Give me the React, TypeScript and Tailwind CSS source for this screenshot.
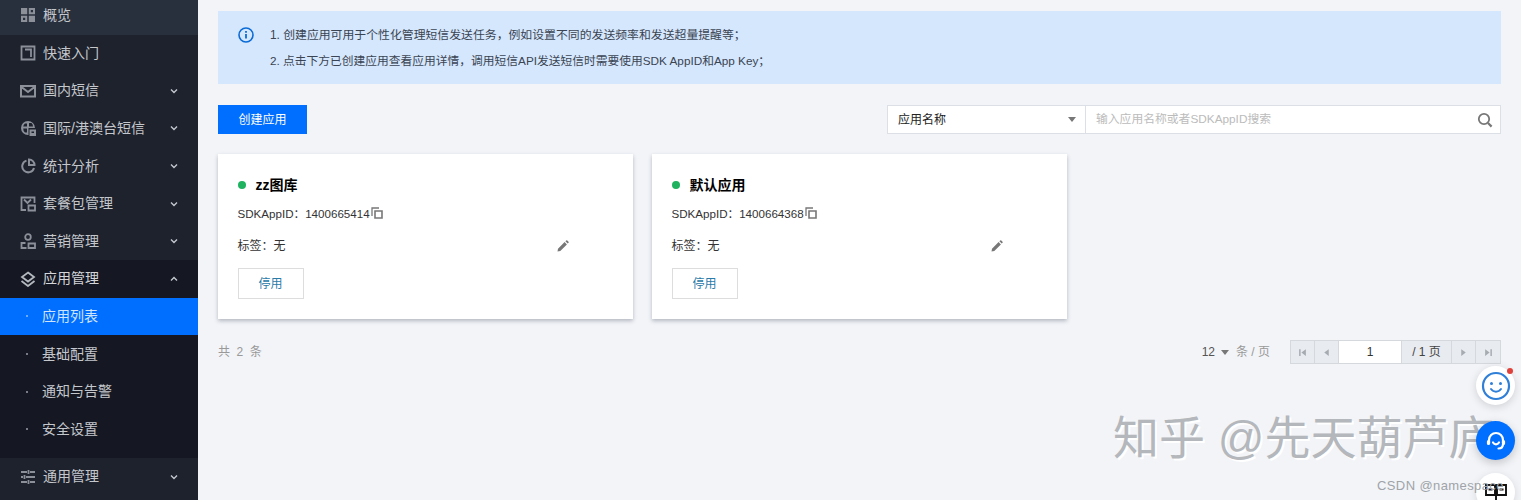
import type { ReactNode } from "react";

const font = "font-['Liberation_Sans','Noto_Sans_CJK_SC',sans-serif]";

function Chevron({ up }: { up?: boolean }) {
  return (
    <svg width="8" height="6" viewBox="0 0 8 6" fill="none" className="text-[#c4c8cf]">
      <path d={up ? "M1 4.5 4 1.5l3 3" : "M1 1.5l3 3 3-3"} stroke="currentColor" strokeWidth="1.4" />
    </svg>
  );
}

const iconCls = "w-[16px] h-[16px] text-[#8b9099]";

const icons: Record<string, ReactNode> = {
  overview: (
    <svg viewBox="0 0 16 16" className={iconCls} fill="currentColor">
      <path d="M1 1h6.2v6.2H1zM8.8 8.8H15V15H8.8z" />
      <path fillRule="evenodd" d="M8.8 1H15v6.2H8.8zm2 2v2.2H13V3zM1 8.8h6.2V15H1zm2 2V13h2.2v-2.2z" />
    </svg>
  ),
  start: (
    <svg viewBox="0 0 16 16" className={iconCls} fill="none" stroke="currentColor" strokeWidth="1.8">
      <path d="M1.5 1.5h13v13h-13zM5 4.5h6v7.5M11 4.5v7.5" />
    </svg>
  ),
  mail: (
    <svg viewBox="0 0 16 16" className={iconCls} fill="none" stroke="currentColor" strokeWidth="2">
      <path d="M1 3h14v10.5H1zM1.5 4l6.5 5 6.5-5" />
    </svg>
  ),
  globe: (
    <svg viewBox="0 0 16 16" className={iconCls} fill="currentColor">
      <path fillRule="evenodd" d="M8 1a7 7 0 1 0 0 14h.5V8H15a7 7 0 0 0-7-7zM5 3.5h2v3H3.2A5 5 0 0 1 5 3.5zM3.2 8.5H7v4H5a5 5 0 0 1-1.8-4zM9 3h2.5a5 5 0 0 1 1.5 3.5H9z" />
      <path d="M9.5 9.5h6.5v6.5H9.5z" />
      <path fill="#1e222d" d="M11.5 11.5h2.5V13h-2.5z" />
    </svg>
  ),
  chart: (
    <svg viewBox="0 0 16 16" className={iconCls} fill="none" stroke="currentColor" strokeWidth="2">
      <path d="M6.5 2.6A6 6 0 1 0 14 10" />
      <path d="M9 1.5a5.5 5.5 0 0 1 5.5 5.5H9z" />
    </svg>
  ),
  pack: (
    <svg viewBox="0 0 16 16" className={iconCls} fill="none" stroke="currentColor" strokeWidth="1.8">
      <path d="M6 14H1.5V1.5h13V7M4 3.5 7.5 7 11 3.5" />
      <path d="M8.5 9.5h6.5v5H8.5z" />
    </svg>
  ),
  user: (
    <svg viewBox="0 0 16 16" className={iconCls} fill="none" stroke="currentColor" strokeWidth="1.8">
      <circle cx="8" cy="4" r="2.8" />
      <path d="M5.5 10H1.5v5h5M8.5 10.5H15V15H8.5z" />
    </svg>
  ),
  layers: (
    <svg viewBox="0 0 16 16" className="w-[16px] h-[16px] text-[#b4b8bf]" fill="none" stroke="currentColor" strokeWidth="1.8">
      <path d="M8 1.5 14 6l-6 4.5L2 6z" />
      <path d="M1.5 10 8 15l6.5-5" />
    </svg>
  ),
  sliders: (
    <svg viewBox="0 0 16 16" className={iconCls} fill="none" stroke="currentColor" strokeWidth="1.8">
      <path d="M1 3h6M10 3h5M1 8h2M6 8h9M1 13h6M10 13h5M8.5 1v4M4.5 6v4M8.5 11v4" />
    </svg>
  ),
};

function NavRow({ icon, label, arrow, up, bright }: { icon: string; label: string; arrow?: boolean; up?: boolean; bright?: boolean }) {
  return (
    <div className="h-[37.6px] flex items-center pl-[20px] pr-[20px]">
      <span className="w-[23px] flex items-center">{icons[icon]}</span>
      <span className={`text-[14px] flex-1 whitespace-nowrap ${bright ? "text-[#d4d6da]" : "text-[#c4c7cc]"}`}>{label}</span>
      {arrow && <Chevron up={up} />}
    </div>
  );
}

function SubRow({ label, active }: { label: string; active?: boolean }) {
  return (
    <div className={`h-[37.6px] flex items-center pl-[26px] ${active ? "bg-[#006eff] text-[#cfe4ff]" : "text-[#c4c7cc]"}`}>
      <span className={`w-[2px] h-[2px] rounded-full mr-[14px] ${active ? "bg-[#8fc0ff]" : "bg-[#9a9ea6]"}`} />
      <span className="text-[14px]">{label}</span>
    </div>
  );
}

function Sidebar() {
  return (
    <aside className="w-[198px] shrink-0 h-full bg-[#1e222d] overflow-hidden">
      <div className="-mt-[4px]">
        <div className="bg-[#28303d] h-[38.5px] flex items-center pl-[20px]">
          <span className="w-[23px] flex items-center">{icons.overview}</span>
          <span className="text-[14px] text-[#c4c7cc]">概览</span>
        </div>
        <NavRow icon="start" label="快速入门" />
        <NavRow icon="mail" label="国内短信" arrow />
        <NavRow icon="globe" label="国际/港澳台短信" arrow />
        <NavRow icon="chart" label="统计分析" arrow />
        <NavRow icon="pack" label="套餐包管理" arrow />
        <NavRow icon="user" label="营销管理" arrow />
        <div className="bg-[#151822] pb-[10px]">
          <NavRow icon="layers" label="应用管理" arrow up bright />
          <SubRow label="应用列表" active />
          <SubRow label="基础配置" />
          <SubRow label="通知与告警" />
          <SubRow label="安全设置" />
        </div>
        <NavRow icon="sliders" label="通用管理" arrow />
      </div>
    </aside>
  );
}

function AppCard({ name, id }: { name: string; id: string }) {
  return (
    <div className="w-[414.5px] h-[165px] bg-white shadow-[0_2px_4px_rgba(54,58,80,0.32)] pt-[22px] px-[20px]">
      <div className="flex items-center h-[18px] -ml-[0.5px]">
        <span className="w-[8px] h-[8px] rounded-full bg-[#1fb25f] mr-[10px]" />
        <span className="text-[14px] font-bold text-black">{name}</span>
      </div>
      <div className="flex items-center h-[16px] mt-[12px] text-[11.6px] text-[#333] -ml-[0.5px]">
        <span>SDKAppID：{id}</span>
        <svg viewBox="0 0 12 12" className="w-[12px] h-[12px] ml-[1px] -mt-[2px] text-[#777]" fill="none" stroke="currentColor" strokeWidth="1.3">
          <path d="M1 9V1h7" />
          <path strokeWidth="1.6" d="M4 4h7v7H4z" />
        </svg>
      </div>
      <div className="flex items-center h-[16px] mt-[16px] text-[12px] text-[#333] w-[331.5px] justify-between -ml-[0.5px]">
        <span>标签：无</span>
        <svg viewBox="0 0 12 12" className="w-[12px] h-[12px] text-[#777]" fill="currentColor">
          <path d="M0.5 11.5 1 8.7 7.6 2.1l2.3 2.3-6.6 6.6zM8.4 1.3l.8-.8a.8.8 0 0 1 1.1 0l1.2 1.2a.8.8 0 0 1 0 1.1l-.8.8z" />
        </svg>
      </div>
      <button className="block w-[66px] h-[31px] mt-[14px] border border-[#dddddd] bg-white text-[12px] text-[#2b7ba8] -ml-[0.5px]">停用</button>
    </div>
  );
}

function PagerBtn({ d }: { d: string }) {
  return (
    <span className="w-[24px] h-full flex items-center justify-center border-r border-[#d5d9de] last:border-r-0">
      <svg viewBox="0 0 8 8" className="w-[9px] h-[9px] text-[#a6abb2]" fill="currentColor">
        <path d={d} />
      </svg>
    </span>
  );
}

function Pagination() {
  return (
    <div className="flex items-center h-[24px] mt-[21px] justify-between text-[12px]">
      <span className="text-[#999] tracking-[1.6px]">共 2 条</span>
      <div className="flex items-center h-full">
        <span className="text-[#555]">12</span>
        <span className="ml-[6px] w-0 h-0 border-x-[4px] border-x-transparent border-t-[5px] border-t-[#777] mt-[1px]" />
        <span className="ml-[7px] text-[#999]">条 / 页</span>
        <div className="ml-[20px] flex h-full items-stretch border border-[#d5d9de] bg-[#e8ebef]">
          <PagerBtn d="M1 1h1.3v6H1zM7 1v6L3 4z" />
          <PagerBtn d="M6 1v6L2 4z" />
          <span className="w-[63px] bg-white flex items-center justify-center text-[#333] border-r border-[#d5d9de]">1</span>
          <span className="w-[50px] flex items-center justify-center text-[#444] border-r border-[#d5d9de]">/ 1 页</span>
          <PagerBtn d="M2 1v6l4-3z" />
          <PagerBtn d="M1 1v6l4-3zM5.7 1H7v6H5.7z" />
        </div>
      </div>
    </div>
  );
}

function FloatButtons() {
  return (
    <>
      <div className="absolute left-[1476px] top-[366px] w-[39px] h-[39px] rounded-full bg-white shadow-[0_2px_8px_rgba(0,0,0,0.15)] flex items-center justify-center">
        <svg viewBox="0 0 30 30" className="w-[30px] h-[30px]" fill="none" stroke="#2f7fd8">
          <circle cx="15" cy="15" r="13" strokeWidth="2.2" />
          <circle cx="10.5" cy="12.5" r="1.5" fill="#2f7fd8" stroke="none" />
          <circle cx="19.5" cy="12.5" r="1.5" fill="#2f7fd8" stroke="none" />
          <path d="M10 18c2.5 3.5 7.5 3.5 10 0" strokeWidth="2" strokeLinecap="round" />
        </svg>
      </div>
      <span className="absolute left-[1507px] top-[368px] w-[6px] h-[6px] rounded-full bg-[#e0403a]" />
      <div className="absolute left-[1476px] top-[421px] w-[39px] h-[39px] rounded-full bg-[#006eff] shadow-[0_3px_10px_rgba(0,0,0,0.2)] flex items-center justify-center">
        <svg viewBox="0 0 24 24" className="w-[24px] h-[24px]" fill="none" stroke="white" strokeWidth="2.2" strokeLinecap="round">
          <path d="M5 14v-3a7 7 0 0 1 14 0v3" />
          <path strokeWidth="3.2" d="M4.5 12.5v2M19.5 12.5v2" />
          <path d="M9 13.5c1.5 2.5 4.5 2.5 6 0M19 15c0 3-2 4.5-4.5 4.5" />
        </svg>
      </div>
      <div className="absolute left-[1476px] top-[473px] w-[39px] h-[39px] rounded-full bg-white shadow-[0_2px_8px_rgba(0,0,0,0.12)] flex justify-center pt-[10px]">
        <svg viewBox="0 0 22 17" className="w-[22px] h-[17px]" fill="none" stroke="#111" strokeWidth="1.9">
          <path d="M1 2h9v10H1zM12 2h9v10h-9zM3.5 6.5h4M14.5 6.5h4M11 2v15" />
        </svg>
      </div>
    </>
  );
}

export default function App() {
  return (
    <div className={`relative w-[1521px] h-[500px] overflow-hidden flex bg-[#f2f4f8] ${font}`}>
      <Sidebar />
      <main className="flex-1 min-w-0 pl-[20px] pr-[20px] pt-[11px]">
        <div className="h-[73px] bg-[#d5e7fd] flex pl-[20px] pt-[14px]">
          <svg viewBox="0 0 16 16" className="w-[16px] h-[16px] mt-[2px] text-[#0a6ad6]" fill="none" stroke="currentColor">
            <circle cx="8" cy="8" r="7" strokeWidth="1.6" />
            <path d="M8 7v4.5" strokeWidth="1.8" />
            <path d="M8 4v1.8" strokeWidth="1.8" />
          </svg>
          <div className="ml-[16px] leading-[26px] text-[#3a4452] -mt-[3px] whitespace-nowrap">
            <p className="text-[11.87px]">1. 创建应用可用于个性化管理短信发送任务，例如设置不同的发送频率和发送超量提醒等；</p>
            <p className="text-[11.75px]">2. 点击下方已创建应用查看应用详情，调用短信API发送短信时需要使用SDK AppID和App Key；</p>
          </div>
        </div>
        <div className="flex justify-between mt-[21px] h-[29px]">
          <button className="w-[89px] bg-[#006eff] text-white text-[12px]">创建应用</button>
          <div className="flex">
            <div className="w-[199px] bg-white border border-[#dcdfe5] flex items-center justify-between pl-[10px] pr-[9px] text-[12px] text-[#222]">
              <span>应用名称</span>
              <span className="w-0 h-0 border-x-[4px] border-x-transparent border-t-[5px] border-t-[#777]" />
            </div>
            <div className="w-[416px] -ml-px bg-white border border-[#dcdfe5] flex items-center justify-between pl-[10px] pr-[7px] text-[11.8px] text-[#bbb]">
              <span>输入应用名称或者SDKAppID搜索</span>
              <svg viewBox="0 0 16 16" className="w-[16px] h-[16px] text-[#777]" fill="none" stroke="currentColor" strokeWidth="1.8">
                <circle cx="7" cy="7" r="5.2" />
                <path d="m11 11 3.6 3.6" strokeWidth="2.2" />
              </svg>
            </div>
          </div>
        </div>
        <div className="flex gap-[19.5px] mt-[20px]">
          <AppCard name="zz图库" id="1400665414" />
          <AppCard name="默认应用" id="1400664368" />
        </div>
        <Pagination />
      </main>
      <div className="absolute left-[1113px] top-[408px] text-[46px] leading-[60px] text-[#b4b7bb] whitespace-nowrap pointer-events-none [text-shadow:2px_2px_0_#ffffff]">
        知乎 @先天葫芦庐
      </div>
      <FloatButtons />
      <div className="absolute left-[1377px] top-[478px] text-[13px] leading-[16px] text-[#a0a3a8] tracking-[0.4px] whitespace-nowrap">
        CSDN @namespace
      </div>
    </div>
  );
}
